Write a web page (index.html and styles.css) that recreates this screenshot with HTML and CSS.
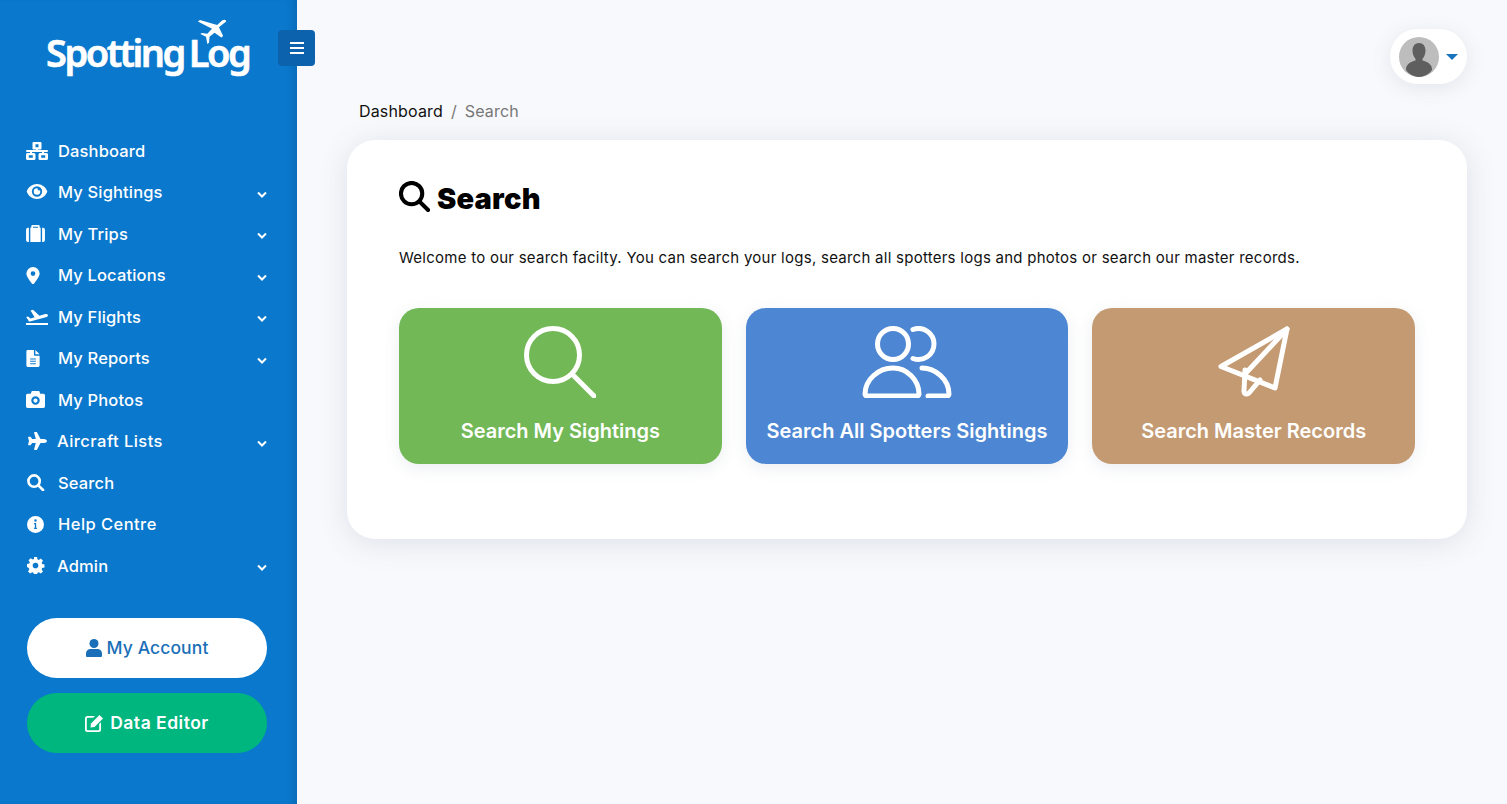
FILE: index.html
```html
<!DOCTYPE html>
<html lang="en">
<head>
<meta charset="utf-8">
<title>Search - Spotting Log</title>
<link rel="stylesheet" href="styles.css">
</head>
<body>
<div class="app">
  <aside class="sidebar">
    <div class="logo">
      <span class="logo-text">Spotting</span><span class="logo-text">Log</span>
      <svg class="logo-plane" viewBox="0 0 32 28"><path d="M31 1.500c-1-1.300-3-.8-4.500.4L21.500 6.500 3 1 .8 2.700 16 10.500l-5 5.500-6-1-1.500 1.200 6 2.800 1.500 8 1.800-1.300.5-6.500 5.500-4.500L26 20l2-1.800-4.500-9.200 6-5c1.300-1 2.400-1.800 1.500-2.500z"/></svg>
    </div>
    <nav class="nav">
      <a class="nav-item"><svg class="nav-icon" viewBox="0 0 22 18"><path d="M7.500 0h7a1 1 0 0 1 1 1v5.500a1 1 0 0 1-1 1H12V8h9a1 1 0 0 1 0 2h-3v1h2.500a1.500 1.500 0 0 1 1.500 1.500v4a1.500 1.500 0 0 1-1.500 1.500h-6.500a1.500 1.500 0 0 1-1.500-1.500v-4a1.500 1.500 0 0 1 1.500-1.500H16v-1H6v1h2a1.500 1.500 0 0 1 1.500 1.500v4A1.500 1.500 0 0 1 8 18H1.500A1.500 1.500 0 0 1 0 16.500v-4A1.500 1.500 0 0 1 1.500 11H4v-1H1a1 1 0 0 1 0-2h9v-.5H7.500a1 1 0 0 1-1-1V1a1 1 0 0 1 1-1zm2 2.300v2.900h3V2.300zM2.800 13.300v2.400h4v-2.400zm12.400 0v2.400h4v-2.400z" fill-rule="evenodd"/></svg><span class="nav-label">Dashboard</span></a>
      <a class="nav-item"><svg class="nav-icon nav-icon-eye" viewBox="0 0 22 16"><path d="M11 0C6 0 2 3 0 8c2 5 6 8 11 8s9-3 11-8c-2-5-6-8-11-8zm0 13.500A5.500 5.500 0 1 1 11 2.500a5.500 5.500 0 0 1 0 11zm0-9a3.500 3.500 0 1 0 3.500 3.500c0-.5-.1-1-.3-1.400A1.800 1.800 0 0 1 11.600 4.500z" fill-rule="evenodd"/></svg><span class="nav-label">My Sightings</span><svg class="chev" viewBox="0 0 10 7"><path d="M1 1.500l4 4 4-4"/></svg></a>
      <a class="nav-item"><svg class="nav-icon nav-icon-sm" viewBox="0 0 20 18"><path d="M7 0h6a1.500 1.500 0 0 1 1.500 1.500V3H18a2 2 0 0 1 2 2v11a2 2 0 0 1-2 2h-1V3h-1.500v15h-11V3H3v15H2a2 2 0 0 1-2-2V5a2 2 0 0 1 2-2h3.500V1.500A1.500 1.500 0 0 1 7 0zm.300 1.800V3h5.400V1.800z" fill-rule="evenodd"/></svg><span class="nav-label">My Trips</span><svg class="chev" viewBox="0 0 10 7"><path d="M1 1.500l4 4 4-4"/></svg></a>
      <a class="nav-item"><svg class="nav-icon nav-icon-pin" viewBox="0 0 14 18"><path d="M7 0a7 7 0 0 0-7 7c0 3 4 8.500 6 10.700a1.300 1.300 0 0 0 2 0C10 15.500 14 10 14 7a7 7 0 0 0-7-7zm0 9.500A2.500 2.500 0 1 1 7 4.500a2.500 2.500 0 0 1 0 5z" fill-rule="evenodd"/></svg><span class="nav-label">My Locations</span><svg class="chev" viewBox="0 0 10 7"><path d="M1 1.500l4 4 4-4"/></svg></a>
      <a class="nav-item"><svg class="nav-icon" viewBox="0 0 22 16"><path d="M0 14h22v2H0zM3 12.500L.2 8l1.800-.5 2.600 2 4-1.200L4.500 1.500 7 .8l6.500 6 5-1.500c1.300-.4 3-.2 3.400.8.300 1-.8 1.800-2 2.200L4 12.500z"/></svg><span class="nav-label">My Flights</span><svg class="chev" viewBox="0 0 10 7"><path d="M1 1.500l4 4 4-4"/></svg></a>
      <a class="nav-item"><svg class="nav-icon nav-icon-pin" viewBox="0 0 14 18"><path d="M1.500 0H8v5a1 1 0 0 0 1 1h5v10.500a1.500 1.500 0 0 1-1.500 1.500h-11A1.500 1.500 0 0 1 0 16.500v-15A1.500 1.500 0 0 1 1.500 0zM9.500 0L14 4.500H9.500zM4 9v1h6V9zm0 2.500v1h6v-1zM4 14v1h6v-1z" fill-rule="evenodd"/></svg><span class="nav-label">My Reports</span><svg class="chev" viewBox="0 0 10 7"><path d="M1 1.500l4 4 4-4"/></svg></a>
      <a class="nav-item"><svg class="nav-icon nav-icon-sm" viewBox="0 0 18 16"><path d="M5.500 0h7l1 2.500h3A1.500 1.500 0 0 1 18 4v10.500a1.500 1.500 0 0 1-1.500 1.500h-15A1.500 1.500 0 0 1 0 14.500V4a1.500 1.500 0 0 1 1.500-1.500h3zM9 5a4 4 0 1 0 0 8 4 4 0 0 0 0-8zm0 2a2 2 0 1 1 0 4 2 2 0 0 1 0-4z" fill-rule="evenodd"/></svg><span class="nav-label">My Photos</span></a>
      <a class="nav-item"><svg class="nav-icon" viewBox="0 0 20 18"><path d="M20 9c0 1-1.500 2-3 2h-3.500l-3.500 6.700c-.1.200-.4.300-.6.300H7.700c-.4 0-.7-.4-.6-.8L8.800 11H5.200l-1.500 2a.6.6 0 0 1-.5.300H1.700c-.4 0-.7-.4-.6-.8L2 9 1.100 5.500c-.1-.4.200-.8.600-.8h1.500c.2 0 .4.100.5.300l1.500 2h3.600L7.100.800C7 .4 7.300 0 7.700 0h1.700c.2 0 .5.100.6.300L13.500 7H17c1.500 0 3 1 3 2z"/></svg><span class="nav-label nav-label-tight nav-label-wide">Aircraft Lists</span><svg class="chev" viewBox="0 0 10 7"><path d="M1 1.500l4 4 4-4"/></svg></a>
      <a class="nav-item"><svg class="nav-icon nav-icon-sm" viewBox="0 0 18 18"><circle class="stroke" cx="7.500" cy="7.500" r="6"/><path class="stroke" d="M12 12l5 5"/></svg><span class="nav-label">Search</span></a>
      <a class="nav-item"><svg class="nav-icon nav-icon-sm" viewBox="0 0 18 18"><path d="M9 0a9 9 0 1 1 0 18A9 9 0 0 1 9 0zm0 3.500a1.300 1.300 0 1 0 0 2.600 1.300 1.300 0 0 0 0-2.600zM7.500 7.500v1.300h.8v3.700h-.8v1.300h3v-1.300h-.8V7.500z" fill-rule="evenodd"/></svg><span class="nav-label nav-label-wide">Help Centre</span></a>
      <a class="nav-item"><svg class="nav-icon nav-icon-sm" viewBox="0 0 18 18"><path d="M7.400 0h3.200l.5 2.500 1.400.6 2.200-1.400 2.200 2.200-1.400 2.200.6 1.400 2.400.5v3.200l-2.400.5-.6 1.400 1.400 2.200-2.200 2.200-2.200-1.400-1.400.6-.5 2.300H7.400l-.5-2.300-1.400-.6-2.200 1.400-2.200-2.200 1.400-2.200-.6-1.400L0 10.700V7.500l2.400-.5.600-1.400-1.400-2.200 2.200-2.200 2.200 1.400 1.400-.6zM9 6a3 3 0 1 0 0 6 3 3 0 0 0 0-6z" fill-rule="evenodd"/></svg><span class="nav-label nav-label-tight">Admin</span><svg class="chev" viewBox="0 0 10 7"><path d="M1 1.500l4 4 4-4"/></svg></a>
    </nav>
    <div class="side-actions">
      <a class="pill pill-white"><svg class="pill-icon" viewBox="0 0 16 18"><circle cx="8" cy="4.500" r="4.500"/><path d="M4.500 10h7a4.500 4.500 0 0 1 4.500 4.500V17a1 1 0 0 1-1 1H1a1 1 0 0 1-1-1v-2.500A4.500 4.500 0 0 1 4.500 10z"/></svg>My Account</a>
      <a class="pill pill-green"><svg class="pill-icon pill-icon-edit" viewBox="0 0 19 18"><path d="M2.500 2H10L8.200 3.800H2.800a1 1 0 0 0-1 1v10.400a1 1 0 0 0 1 1h10.400a1 1 0 0 0 1-1V10L16 8.200v7.300a2.500 2.500 0 0 1-2.500 2.500h-11A2.500 2.500 0 0 1 0 15.500v-11A2.500 2.500 0 0 1 2.500 2z"/><path d="M14.500 1l3.500 3.500-8.500 8.500-4 .5.500-4z"/></svg>Data Editor</a>
    </div>
  </aside>
  <button class="toggle" type="button" aria-label="Toggle menu"><svg viewBox="0 0 14 12"><path d="M0 1h14M0 6h14M0 11h14"/></svg></button>
  <main class="main">
    <div class="topbar">
      <div class="user">
        <svg class="avatar" viewBox="0 0 40 40"><circle cx="20" cy="20" r="20" fill="#bdbdbd"/><path fill="#5f5f5f" d="M20 6c4 0 6.500 3 6.500 7.500 0 3.500-1.300 6.500-3 8.200v1.800c5 1.500 9.500 3.500 9.500 9 0 2-6.500 7.500-13 7.500S7 34.500 7 32.500c0-5.500 4.500-7.500 9.500-9v-1.800c-1.700-1.700-3-4.700-3-8.200C13.500 9 16 6 20 6z"/></svg>
        <span class="caret"></span>
      </div>
    </div>
    <div class="crumbs"><span class="crumb-link">Dashboard</span><span class="crumb-sep">/</span><span class="crumb-current">Search</span></div>
    <section class="card">
      <h1 class="title"><svg class="title-icon" viewBox="0 0 32 32"><circle cx="13" cy="13" r="11"/><path d="M21 21l9 9"/></svg>Search</h1>
      <p class="intro">Welcome to our search facilty. You can search your logs, search all spotters logs and photos or search our master records.</p>
      <div class="tiles">
        <a class="tile tile-green">
          <svg class="tile-icon" viewBox="0 0 72 72"><circle cx="29" cy="29" r="26.500"/><path d="M48 48l22 22"/></svg>
          <span>Search My Sightings</span>
        </a>
        <a class="tile tile-blue">
          <svg class="tile-icon tile-icon-wide" viewBox="0 0 90 72"><circle cx="31" cy="18" r="15.500"/><path d="M51 3.500a15.500 15.500 0 1 1 0 29"/><path d="M31 42c-15 0-28 12-28 26a2 2 0 0 0 2 2h50a2 2 0 0 0 2-2c0-14-12-26-26-26z"/><path d="M60 42c13 0 27 11 27 26a2 2 0 0 1-2 2H66"/></svg>
          <span>Search All Spotters Sightings</span>
        </a>
        <a class="tile tile-tan">
          <svg class="tile-icon" viewBox="0 0 72 72"><path d="M69 3L3 40.500 57 62z"/><path d="M69 3L27 48"/><path d="M27 44l-1 21c0 3 3 4 5 2l11-13"/></svg>
          <span>Search Master Records</span>
        </a>
      </div>
    </section>
  </main>
</div>
</body>
</html>
```

FILE: styles.css
```css
* { box-sizing: border-box; }
html, body { margin: 0; height: 100%; }
body {
  background: #f8f9fc;
  font-family: "Inter", "Liberation Sans", sans-serif;
  color: #111;
  overflow: hidden;
}
a { color: inherit; text-decoration: none; }

.app { display: flex; height: 804px; position: relative; }

.sidebar {
  width: 297px;
  flex: none;
  background: #0a78cc;
  box-shadow: inset -8px 0 8px -6px rgba(0, 50, 100, .25);
  padding: 0 27px;
  display: flex;
  flex-direction: column;
}

.logo {
  position: relative;
  height: 130px;
  padding: 31px 0 0 19px;
  color: #fff;
  display: flex;
  align-items: flex-start;
  gap: 5px;
}
.logo-text {
  font-family: "Noto Sans", sans-serif;
  font-weight: 600;
  font-size: 38px;
  line-height: 42px;
  letter-spacing: -2.500px;
  -webkit-text-stroke: .6px #fff;
}
.logo-plane {
  position: absolute;
  left: 170px;
  top: 19px;
  width: 30px;
  height: 26px;
  fill: #fff;
}

.nav { display: flex; flex-direction: column; }
.nav-item {
  height: 41.5px;
  display: flex;
  align-items: center;
  color: #fff;
  font-size: 16.500px;
  font-weight: 500;
}
.nav-icon {
  width: 22px;
  height: 18px;
  fill: #fff;
  margin-right: 10px;
  margin-left: -1px;
  flex: none;
}
.nav-icon-sm { width: 19px; height: 17px; margin-right: 13px; }
.nav-icon-eye { height: 15px; margin-top: -2px; }
.nav-icon-pin { width: 14px; height: 17px; margin-right: 18px; }
.nav-label { letter-spacing: .15px; }
.nav-label-tight { margin-left: -1px; }
.nav-label-wide { letter-spacing: .45px; }
.stroke { fill: none; stroke: #fff; stroke-width: 2.800; stroke-linecap: round; }
.chev {
  width: 10px;
  height: 7px;
  margin-left: auto;
  margin-right: 3px;
  margin-top: 4px;
  fill: none;
  stroke: #fff;
  stroke-width: 2;
}

.side-actions { display: flex; flex-direction: column; gap: 15px; margin-top: 31px; width: 240px; }
.pill {
  height: 60px;
  border-radius: 30px;
  display: flex;
  align-items: center;
  justify-content: center;
  font-size: 17.500px;
  font-weight: 500;
  gap: 5px;
  letter-spacing: .1px;
}
.pill-white { background: #fff; color: #1a6fb8; }
.pill-green { background: #00b67f; color: #fff; font-weight: 600; gap: 6px; letter-spacing: .5px; }
.pill-icon { width: 16px; height: 18px; fill: currentColor; }
.pill-icon-edit { width: 19px; }

.toggle {
  position: absolute;
  left: 278px;
  top: 30px;
  width: 37px;
  height: 36px;
  background: #0d62ae;
  border: 0;
  border-radius: 4px;
  padding: 0;
  display: flex;
  align-items: center;
  justify-content: center;
}
.toggle svg { width: 14px; height: 12px; fill: none; stroke: #fff; stroke-width: 2; }

.main {
  flex: 1;
  padding: 29px 40px 0 50px;
  display: flex;
  flex-direction: column;
}
.topbar { display: flex; justify-content: flex-end; height: 55px; }
.user {
  width: 77px;
  height: 55px;
  background: #fff;
  border-radius: 28px;
  box-shadow: 0 4px 20px rgba(70, 90, 120, .12);
  display: flex;
  align-items: center;
  padding-left: 9px;
  gap: 7px;
}
.avatar { width: 40px; height: 40px; flex: none; }
.caret {
  width: 0;
  height: 0;
  border-left: 6px solid transparent;
  border-right: 6px solid transparent;
  border-top: 6px solid #1a73bd;
}

.crumbs {
  height: 56px;
  padding: 17px 0 0 12px;
  font-size: 16px;
  line-height: 20px;
  display: flex;
  gap: 8px;
  letter-spacing: .15px;
}
.crumb-link { color: #111; }
.crumb-sep, .crumb-current { color: #777; }

.card {
  height: 399px;
  background: #fff;
  border-radius: 28px;
  box-shadow: 0 4px 30px rgba(70, 90, 120, .15);
  padding: 40px 52px 0;
}
.title {
  margin: 0;
  height: 36px;
  display: flex;
  align-items: center;
  gap: 7px;
  font-size: 29px;
  font-weight: 900;
  color: #000;
  letter-spacing: .2px;
}
.title-icon { width: 31px; height: 31px; fill: none; stroke: #000; stroke-width: 4.200; stroke-linecap: round; margin-top: -3px; }
.intro {
  margin: 32px 0 0;
  font-size: 15px;
  line-height: 20px;
  letter-spacing: .26px;
  color: #111;
}
.tiles {
  display: grid;
  grid-template-columns: repeat(3, 1fr);
  gap: 24px;
  margin-top: 40px;
}
.tile {
  height: 156px;
  border-radius: 20px;
  color: #fff;
  display: flex;
  flex-direction: column;
  align-items: center;
  padding-top: 18px;
  font-size: 20px;
  font-weight: 600;
  box-shadow: 0 4px 16px rgba(70, 90, 120, .1);
}
.tile span { margin-top: 21px; line-height: 24px; }
.tile-green { background: #72b856; }
.tile-blue { background: #4d86d2; }
.tile-tan { background: #c49a72; }
.tile-icon { width: 72px; height: 72px; flex: none; fill: none; stroke: #fff; stroke-width: 5; stroke-linecap: round; stroke-linejoin: round; }
.tile-icon-wide { width: 90px; }
```
